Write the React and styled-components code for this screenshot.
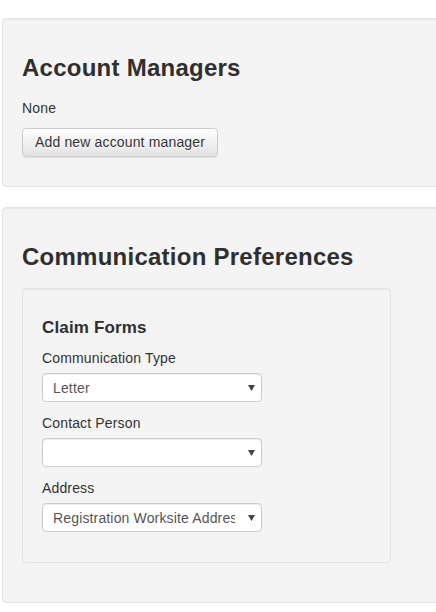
import React from "react";
import styled, { createGlobalStyle } from "styled-components";

const Global = createGlobalStyle`
  html, body { margin: 0; padding: 0; background: #fff; overflow: hidden; }
  body { font-family: "Liberation Sans", Arial, sans-serif; font-size: 14px; line-height: 20px; color: #333; letter-spacing: 0.15px; }
  * { box-sizing: border-box; }
`;

const Page = styled.div`
  padding: 18px 0 0 2px;
  width: 480px;
`;

const Well = styled.section`
  background: #f4f4f4;
  border: 1px solid #e3e3e3;
  border-radius: 4px;
  box-shadow: inset 0 1px 1px rgba(0, 0, 0, 0.05);
  padding: 19px;
  margin-bottom: ${(p) => p.$mb || 20}px;
  width: ${(p) => p.$w || "auto"};
`;

const Title = styled.h2`
  font-size: 24px;
  line-height: 1.1;
  font-weight: bold;
  letter-spacing: 0.25px;
  color: #2f2f2f;
  margin: 17px 0 17px;
`;

const SubTitle = styled.h4`
  font-size: 17px;
  line-height: 1.1;
  font-weight: bold;
  letter-spacing: 0.15px;
  color: #2f2f2f;
  margin: 11px 0 11px;
`;

const Text = styled.p`
  margin: 0 0 10px;
`;

const ButtonRow = styled.div`
  margin-bottom: 10px;
`;

const Button = styled.button`
  font-family: inherit;
  font-size: 14px;
  letter-spacing: 0.15px;
  line-height: 19px;
  color: #333;
  padding: 4px 12px;
  border: 1px solid #ccc;
  border-radius: 4px;
  background: linear-gradient(to bottom, #ffffff 0%, #e2e2e2 100%);
  text-shadow: 0 1px 0 #fff;
  box-shadow: inset 0 1px 0 rgba(255, 255, 255, 0.15), 0 1px 1px rgba(0, 0, 0, 0.075);
  cursor: pointer;
`;

const Group = styled.div`
  margin-bottom: 11px;
`;

const Label = styled.label`
  display: block;
  margin-bottom: 5px;
  color: #333;
`;

const SelectWrap = styled.div`
  position: relative;
  width: 220px;
`;

const Select = styled.select`
  appearance: none;
  -webkit-appearance: none;
  display: block;
  width: 100%;
  height: 29px;
  padding: 0 26px 0 10px;
  font-family: inherit;
  font-size: 14px;
  letter-spacing: 0.15px;
  color: #555;
  background: #fff;
  border: 1px solid #ccc;
  border-radius: 4px;
  box-shadow: inset 0 1px 1px rgba(0, 0, 0, 0.075);
  outline: none;
`;

const Caret = styled.svg`
  position: absolute;
  right: 7px;
  top: 12px;
  pointer-events: none;
`;

function Dropdown({ value, options }) {
  return (
    <SelectWrap>
      <Select defaultValue={value}>
        {options.map((o) => (
          <option key={o} value={o}>
            {o}
          </option>
        ))}
      </Select>
      <Caret width="7" height="6" viewBox="0 0 7 6">
        <polygon points="0,0 7,0 3.5,6" fill="#444" />
      </Caret>
    </SelectWrap>
  );
}

export default function App() {
  return (
    <>
      <Global />
      <Page>
        <Well>
          <Title>Account Managers</Title>
          <Text>None</Text>
          <ButtonRow>
            <Button type="button">Add new account manager</Button>
          </ButtonRow>
        </Well>
        <Well>
          <Title>Communication Preferences</Title>
          <Well $w="369px" $mb={20}>
            <SubTitle>Claim Forms</SubTitle>
            <Group>
              <Label>Communication Type</Label>
              <Dropdown value="Letter" options={["Letter", "Email", "Fax"]} />
            </Group>
            <Group>
              <Label>Contact Person</Label>
              <Dropdown value="" options={[""]} />
            </Group>
            <Group>
              <Label>Address</Label>
              <Dropdown
                value="Registration Worksite Address"
                options={["Registration Worksite Address", "Mailing Address"]}
              />
            </Group>
          </Well>
        </Well>
      </Page>
    </>
  );
}
